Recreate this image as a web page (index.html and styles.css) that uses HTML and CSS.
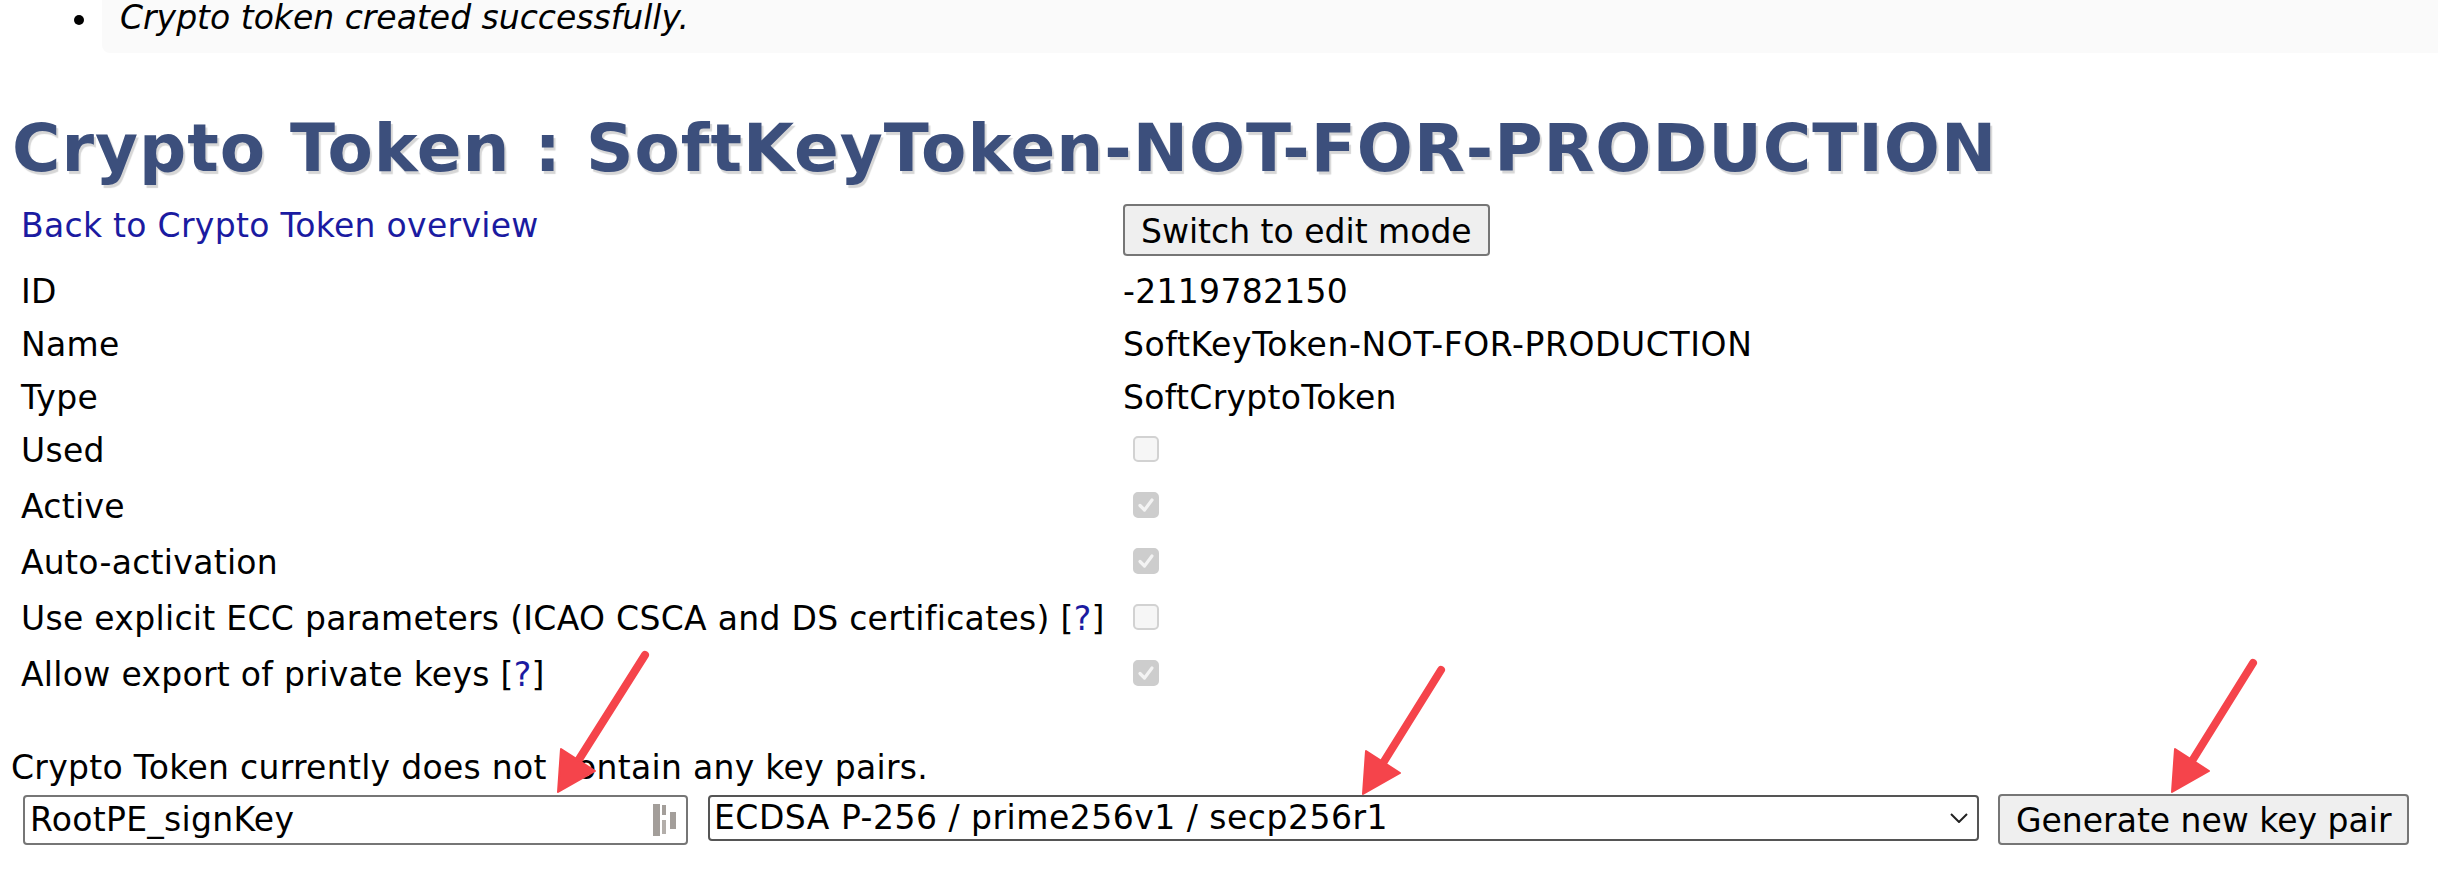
FILE: index.html
```html
<!DOCTYPE html>
<html>
<head>
<meta charset="utf-8">
<title>Crypto Token</title>
<link rel="stylesheet" href="styles.css">
</head>
<body>
<ul class="messages">
  <li class="message"><span class="bullet"></span><div class="message-box"><em>Crypto token created successfully.</em></div></li>
</ul>
<h1 class="title">Crypto Token : SoftKeyToken-NOT-FOR-PRODUCTION</h1>
<div class="props">
  <div class="row row-head"><div class="label"><a class="link" href="#">Back to Crypto Token overview</a></div><div class="value"><button class="btn btn-edit">Switch to edit mode</button></div></div>
  <div class="row row-text"><div class="label">ID</div><div class="value">-2119782150</div></div>
  <div class="row row-text"><div class="label">Name</div><div class="value value-wide">SoftKeyToken-NOT-FOR-PRODUCTION</div></div>
  <div class="row row-text"><div class="label">Type</div><div class="value">SoftCryptoToken</div></div>
  <div class="row row-check"><div class="label">Used</div><div class="value"><span class="cb"></span></div></div>
  <div class="row row-check"><div class="label">Active</div><div class="value"><span class="cb cb-on"><svg viewBox="0 0 22 22" width="22" height="22"><path d="M5 11.5 L9.5 16 L17 6" fill="none" stroke="#f3f3f3" stroke-width="3.2" stroke-linecap="round" stroke-linejoin="round"/></svg></span></div></div>
  <div class="row row-check"><div class="label">Auto-activation</div><div class="value"><span class="cb cb-on"><svg viewBox="0 0 22 22" width="22" height="22"><path d="M5 11.5 L9.5 16 L17 6" fill="none" stroke="#f3f3f3" stroke-width="3.2" stroke-linecap="round" stroke-linejoin="round"/></svg></span></div></div>
  <div class="row row-check"><div class="label">Use explicit ECC parameters (ICAO CSCA and DS certificates) [<a class="link" href="#">?</a>]</div><div class="value"><span class="cb"></span></div></div>
  <div class="row row-check"><div class="label">Allow export of private keys [<a class="link" href="#">?</a>]</div><div class="value"><span class="cb cb-on"><svg viewBox="0 0 22 22" width="22" height="22"><path d="M5 11.5 L9.5 16 L17 6" fill="none" stroke="#f3f3f3" stroke-width="3.2" stroke-linecap="round" stroke-linejoin="round"/></svg></span></div></div>
</div>
<p class="empty">Crypto Token currently does not contain any key pairs.</p>
<div class="keygen">
  <div class="textfield"><span class="field-text">RootPE_signKey</span><svg class="field-icon" width="24" height="32" viewBox="0 0 24 32"><rect x="0" y="0" width="7" height="32" fill="#a39e9a"/><rect x="9" y="1" width="4" height="10" fill="#a39e9a"/><rect x="9" y="16" width="4" height="14" fill="#b3aeaa"/><rect x="17" y="8" width="6" height="17" fill="#a39e9a"/></svg></div>
  <div class="select"><span class="field-text select-text">ECDSA P-256 / prime256v1 / secp256r1</span><svg class="chevron" width="18" height="10" viewBox="0 0 18 10"><path d="M1 1 L9 9 L17 1" fill="none" stroke="#222" stroke-width="2"/></svg></div>
  <button class="btn btn-gen">Generate new key pair</button>
</div>
<svg class="annotations" width="2438" height="872" viewBox="0 0 2438 872">
  <g stroke="#f5444b" fill="#f5444b" stroke-linecap="round" stroke-linejoin="round">
    <line x1="645" y1="655" x2="578" y2="761" stroke-width="8"/>
    <polygon points="558,792 595,771 561,749" stroke-width="2"/>
    <line x1="1441" y1="670" x2="1383" y2="763" stroke-width="8"/>
    <polygon points="1363,794 1400,773 1366,751" stroke-width="2"/>
    <line x1="2253" y1="663" x2="2192" y2="761" stroke-width="8"/>
    <polygon points="2172,792 2209,771 2175,749" stroke-width="2"/>
  </g>
</svg>
</body>
</html>
```

FILE: styles.css
```css
html, body {
  background: #ffffff;
}
body {
  margin: 0;
  position: relative;
  width: 2438px;
  height: 872px;
  overflow: hidden;
  font-family: "DejaVu Sans", Verdana, sans-serif;
  font-size: 33px;
  line-height: 40px;
  letter-spacing: 0.3px;
  color: #000;
}
.messages {
  list-style: none;
  margin: 0;
  padding: 0;
}
.message {
  display: flex;
  align-items: flex-start;
}
.bullet {
  flex: none;
  width: 10px;
  height: 10px;
  border-radius: 50%;
  background: #000;
  margin: 15px 0 0 74px;
}
.message-box {
  flex: 1;
  margin-left: 18px;
  height: 53px;
  box-sizing: border-box;
  padding-left: 18px;
  line-height: 36px;
  letter-spacing: 0;
  background: #fafafa;
  border-bottom-left-radius: 8px;
}
.title {
  margin: 56px 0 0 12px;
  font-size: 66px;
  line-height: 80px;
  font-weight: bold;
  letter-spacing: 1px;
  color: #3c4f7c;
  text-shadow: 2px 3px 1px #d6d6d6;
  white-space: nowrap;
}
.props {
  margin-top: 15px;
  padding-left: 21px;
}
.row {
  display: flex;
  align-items: flex-start;
  white-space: nowrap;
}
.label {
  flex: none;
  width: 1102px;
}
.value-wide {
  letter-spacing: 0.6px;
}
.row-head {
  height: 68px;
}
.row-head .label {
  padding-top: 2px;
}
.row-text {
  height: 53px;
}
.row-check {
  height: 56px;
}
.link {
  color: #1b1ba1;
  text-decoration: none;
}
.btn {
  font: inherit;
  letter-spacing: normal;
  color: #000;
  background: #efefef;
  border: 2px solid #767676;
  border-radius: 4px;
  box-sizing: border-box;
  padding: 3px 16px 0;
  height: 52px;
  margin: 0;
}
.cb {
  display: flex;
  align-items: center;
  justify-content: center;
  width: 26px;
  height: 26px;
  box-sizing: border-box;
  border: 2px solid #d2d2d2;
  border-radius: 5px;
  background: #f6f6f6;
  margin: 5px 0 0 10px;
}
.cb-on {
  background: #cdcdcd;
  border-color: #cdcdcd;
}
.empty {
  margin: 37px 0 0 11px;
}
.keygen {
  display: flex;
  align-items: flex-start;
  margin: 7px 0 0 23px;
}
.textfield {
  flex: none;
  display: flex;
  align-items: center;
  width: 665px;
  height: 50px;
  box-sizing: border-box;
  border: 2px solid #767676;
  border-radius: 4px;
  padding: 0 9px 0 5px;
}
.field-text {
  flex: 1;
  white-space: nowrap;
}
.select-text {
  letter-spacing: 0.5px;
}
.field-icon {
  flex: none;
}
.select {
  flex: none;
  display: flex;
  align-items: center;
  margin-left: 20px;
  width: 1271px;
  height: 46px;
  box-sizing: border-box;
  border: 2px solid #555;
  border-radius: 4px;
  padding: 0 9px 0 4px;
}
.chevron {
  flex: none;
}
.btn-gen {
  margin-left: 19px;
  margin-top: -1px;
  height: 51px;
  padding: 2px 16px 0;
}
.annotations {
  position: absolute;
  left: 0;
  top: 0;
  pointer-events: none;
}
```
